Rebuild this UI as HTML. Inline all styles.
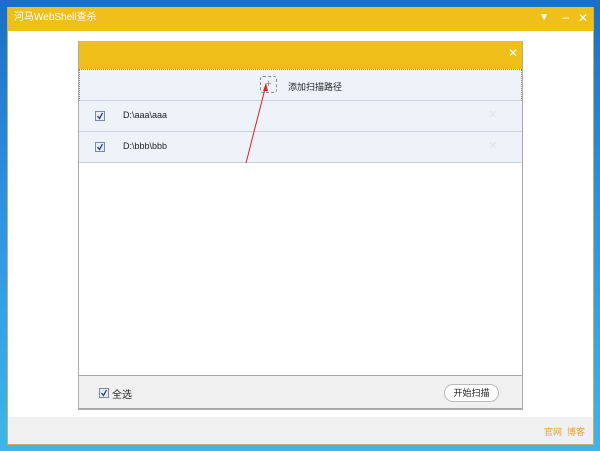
<!DOCTYPE html>
<html><head><meta charset="utf-8"><style>
*{margin:0;padding:0;box-sizing:border-box}
body{width:600px;height:451px;overflow:hidden;position:relative;font-family:"Liberation Sans","Noto Sans CJK SC",sans-serif;font-size:9px;background:linear-gradient(180deg,#1a6fc4 0%,#2a8fe0 40%,#3fb5ea 100%)}
.win{position:absolute;left:7px;top:7px;width:587px;height:438px;background:#fff;border:1px solid #c9b060;border-top:none}
.title{position:absolute;left:0;top:0;width:100%;height:24px;background:#f0c01a;color:#fff;font-size:10px;line-height:22px;padding-left:6px}
.dlg{position:absolute;left:70px;top:34px;width:445px;height:369px;border:1px solid #aaa;border-top:none;background:#fff}
.dh{height:28px;background:#f0c01a;position:relative}
.row{position:absolute;left:0;width:443px;background:#eef3fa;border-bottom:1px solid #c8d2de}
.cb{position:absolute;width:10px;height:10px;border:1px solid #7a8aa0;background:#e8eef6}
.cb svg{position:absolute;left:0;top:0}
.foot{position:absolute;left:0;top:334px;width:443px;height:34px;background:#f0f0f0;border-top:1px solid #aaa;border-bottom:1px solid #aaa}
.bot{position:absolute;left:0;top:410px;width:585px;height:27px;background:#f0f0f0}
</style></head><body>
<div class="win">
<div class="title">河马WebShell查杀
<span style="position:absolute;right:44px;top:0;font-size:10px">▼</span>
<span style="position:absolute;right:24px;top:-1px;font-size:12px">–</span>
<span style="position:absolute;right:5px;top:0;font-size:12px">✕</span></div>
<div class="dlg">
<div class="dh"><span style="position:absolute;right:4px;top:5px;color:#fff;font-size:12px">✕</span></div>
<div class="row" style="top:28px;height:32px;border:1px dotted #888;border-bottom:1px solid #c8d2de">
<div style="position:absolute;left:180px;top:6px;width:17px;height:17px;border:1px dashed #888;border-radius:3px;text-align:center;line-height:15px;color:#888;font-size:11px">+</div>
<span style="position:absolute;left:208px;top:10px;font-size:9px;color:#222">添加扫描路径</span></div>
<div class="row" style="top:60px;height:31px"><div class="cb" style="left:16px;top:10px"><svg width="8" height="8"><path d="M1.5 4 L3.5 6.5 L6.5 1" stroke="#2a3a7a" stroke-width="1.3" fill="none"/></svg></div><span style="position:absolute;left:44px;top:9px;color:#222">D:\aaa\aaa</span><span style="position:absolute;left:409px;top:7px;color:#dde4ee;font-size:11px">✕</span></div>
<div class="row" style="top:91px;height:31px"><div class="cb" style="left:16px;top:10px"><svg width="8" height="8"><path d="M1.5 4 L3.5 6.5 L6.5 1" stroke="#2a3a7a" stroke-width="1.3" fill="none"/></svg></div><span style="position:absolute;left:44px;top:9px;color:#222">D:\bbb\bbb</span><span style="position:absolute;left:409px;top:7px;color:#dde4ee;font-size:11px">✕</span></div>
<svg style="position:absolute;left:0;top:0" width="443" height="370"><line x1="167" y1="122" x2="187" y2="44" stroke="#e02020" stroke-width="1"/><polygon points="187,42 184,50 189,50" fill="#e02020"/></svg>
<div class="foot"><div class="cb" style="left:20px;top:12px"><svg width="8" height="8"><path d="M1.5 4 L3.5 6.5 L6.5 1" stroke="#2a3a7a" stroke-width="1.3" fill="none"/></svg></div><span style="position:absolute;left:33px;top:10px;color:#222;font-size:10px">全选</span>
<div style="position:absolute;left:365px;top:8px;width:55px;height:18px;border:1px solid #bbb;border-radius:9px;background:#fff;text-align:center;line-height:16px;color:#222">开始扫描</div></div>
</div>
<div class="bot"><span style="position:absolute;right:8px;top:8px;color:#f0a020;font-size:9px">官网&nbsp;&nbsp;博客</span></div>
</div>
</body></html>
